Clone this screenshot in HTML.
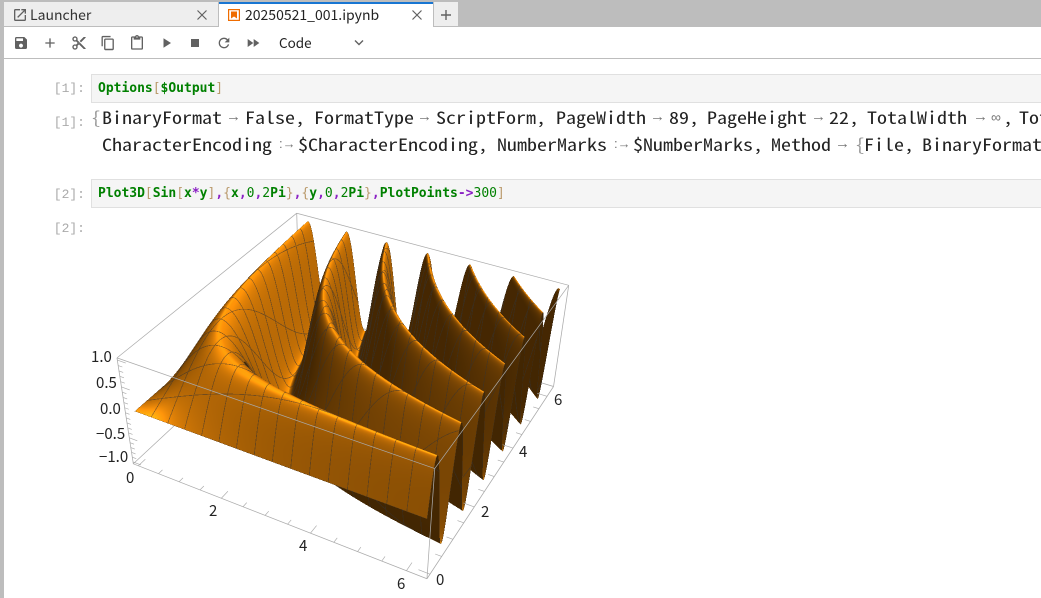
<!DOCTYPE html>
<html><head><meta charset="utf-8"><style>
html,body{margin:0;padding:0;width:1041px;height:598px;overflow:hidden;background:#fff}
body{position:relative;font-family:"Liberation Sans","Noto Sans CJK JP",sans-serif}
.a{position:absolute;white-space:pre}
.ui{font-family:"Noto Sans CJK JP","Liberation Sans",sans-serif;color:#333;font-size:14px;line-height:20px}
.pr{font-family:"Liberation Mono",monospace;font-size:13px;color:#aaa;line-height:16px;width:40px;text-align:right;left:45px}
.in{position:absolute;left:91px;width:960px;height:27px;background:#f5f5f5;border:1px solid #e0e0e0;box-sizing:content-box}
.code{position:absolute;left:98px;font-family:"DejaVu Sans Mono","Liberation Mono",monospace;font-size:13px;line-height:16px;white-space:pre;letter-spacing:-.01px}
.g{color:#008000;font-weight:bold}.n{color:#008000}.t{color:#ba9a6c}.p{color:#8a1fc4;font-weight:bold}
.o{position:absolute;font-family:"Noto Sans Mono CJK JP","Noto Sans Mono CJK SC","DejaVu Sans Mono","Liberation Mono",monospace;font-size:17px;line-height:20px;color:#222;white-space:pre;transform:scaleX(1.176);transform-origin:0 0}
.ar{position:absolute;color:#777;font-family:"Liberation Sans",sans-serif;font-size:15px;line-height:20px;white-space:pre}
svg{position:absolute}
</style></head><body>
<div class="a" style="left:0;top:0;width:1041px;height:26px;background:#bdbdbd"></div>
<div class="a" style="left:0;top:0;width:4px;height:598px;background:#bdbdbd"></div>
<div class="a" style="left:4px;top:2px;width:214px;height:24px;background:#eee"></div>
<div class="a" style="left:219px;top:2px;width:214px;height:25px;background:#fff;border-top:2px solid #1976d2;box-sizing:border-box"></div>
<div class="a" style="left:434px;top:2px;width:24px;height:24px;background:#eee"></div>
<div class="a" style="left:4px;top:26px;width:215px;height:1px;background:#bdbdbd"></div>
<div class="a" style="left:433px;top:26px;width:608px;height:1px;background:#bdbdbd"></div>
<div class="a" style="left:4px;top:58px;width:1037px;height:1px;background:#bdbdbd"></div>

<svg style="left:12px;top:7px" width="16" height="16" viewBox="0 0 24 24" fill="#616161"><path d="M19 19H5V5h7V3H5c-1.11 0-2 .9-2 2v14c0 1.1.89 2 2 2h14c1.1 0 2-.9 2-2v-7h-2v7zM14 3v2h3.59l-9.83 9.83 1.41 1.41L19 6.41V10h2V3h-7z"/></svg>
<div class="a ui" style="left:30px;top:5px">Launcher</div>
<svg style="left:196px;top:9px" width="12" height="12" viewBox="0 0 12 12" stroke="#616161" stroke-width="1.2"><path d="M1.5 1.5l9 9M10.5 1.5l-9 9"/></svg>
<svg style="left:228px;top:9px" width="12" height="12" viewBox="0 0 12 12"><rect x=".6" y=".6" width="10.8" height="10.8" fill="#fff" stroke="#ef6c00" stroke-width="1.2"/><path d="M3 2.500h6v7L6 7.500 3 9.500z" fill="#ef6c00"/></svg>
<div class="a ui" style="left:245px;top:5px;color:#222">20250521_001.ipynb</div>
<svg style="left:411px;top:9px" width="12" height="12" viewBox="0 0 12 12" stroke="#616161" stroke-width="1.2"><path d="M1.5 1.5l9 9M10.5 1.5l-9 9"/></svg>
<svg style="left:440px;top:9px" width="12" height="12" viewBox="0 0 12 12" stroke="#616161" stroke-width="1.4"><path d="M6 1v10M1 6h10"/></svg>

<svg style="left:13px;top:35px" width="16" height="16" viewBox="0 0 24 24" fill="#616161"><path d="M17 3H5c-1.11 0-2 .9-2 2v14c0 1.100.89 2 2 2h14c1.100 0 2-.9 2-2V7l-4-4zm-5 16c-1.66 0-3-1.34-3-3s1.34-3 3-3 3 1.34 3 3-1.34 3-3 3zm3-10H5V5h10v4z"/></svg>
<svg style="left:42px;top:35px" width="16" height="16" viewBox="0 0 24 24" fill="#616161"><path d="M19 13h-6v6h-2v-6H5v-2h6V5h2v6h6v2z"/></svg>
<svg style="left:71px;top:35px" width="16" height="16" viewBox="0 0 24 24" fill="#616161"><path d="M9.640 7.640c.23-.5.36-1.050.36-1.640 0-2.210-1.790-4-4-4S2 3.790 2 6s1.790 4 4 4c.59 0 1.140-.13 1.640-.36L10 12l-2.360 2.360C7.140 14.130 6.590 14 6 14c-2.210 0-4 1.790-4 4s1.790 4 4 4 4-1.790 4-4c0-.59-.13-1.140-.36-1.640L12 14l7 7h3v-1L9.640 7.640zM6 8c-1.100 0-2-.89-2-2s.9-2 2-2 2 .89 2 2-.9 2-2 2zm0 12c-1.100 0-2-.89-2-2s.9-2 2-2 2 .89 2 2-.9 2-2 2zm6-7.500c-.28 0-.5-.22-.5-.5s.22-.5.5-.5.5.22.5.5-.22.5-.5.5zM19 3l-6 6 2 2 7-7V3z"/></svg>
<svg style="left:100px;top:35px" width="16" height="16" viewBox="0 0 18 18" fill="#616161"><path d="M11.900 1H3.200C2.400 1 1.700 1.700 1.700 2.500v10.200h1.500V2.500h8.700V1zm2.200 2.900h-8c-.8 0-1.500.7-1.500 1.500v10.200c0 .8.7 1.500 1.500 1.500h8c.8 0 1.500-.7 1.500-1.500V5.400c0-.8-.7-1.500-1.500-1.500zm0 11.600h-8V5.400h8v10.100z"/></svg>
<svg style="left:129px;top:35px" width="16" height="16" viewBox="0 0 24 24" fill="#616161"><path d="M19 2h-4.180C14.400.84 13.300 0 12 0c-1.300 0-2.400.84-2.820 2H5c-1.100 0-2 .9-2 2v16c0 1.100.9 2 2 2h14c1.100 0 2-.9 2-2V4c0-1.100-.9-2-2-2zm-7 0c.55 0 1 .45 1 1s-.45 1-1 1-1-.45-1-1 .45-1 1-1zm7 18H5V4h2v3h10V4h2v16z"/></svg>
<svg style="left:159px;top:35px" width="16" height="16" viewBox="0 0 16 16" fill="#616161"><path d="M4.500 3.200v9.600L12 8z"/></svg>
<svg style="left:187px;top:35px" width="16" height="16" viewBox="0 0 16 16" fill="#616161"><rect x="4" y="4" width="8" height="8"/></svg>
<svg style="left:216px;top:35px" width="16" height="16" viewBox="0 0 24 24" fill="#616161"><path d="M17.650 6.350C16.200 4.900 14.210 4 12 4c-4.420 0-7.990 3.580-7.990 8s3.570 8 7.990 8c3.730 0 6.840-2.550 7.730-6h-2.080c-.82 2.330-3.040 4-5.650 4-3.310 0-6-2.690-6-6s2.690-6 6-6c1.660 0 3.140.69 4.220 1.780L13 11h7V4l-2.350 2.350z"/></svg>
<svg style="left:245px;top:35px" width="16" height="16" viewBox="0 0 24 24" fill="#616161"><path d="M4 18l8.500-6L4 6v12zm9-12v12l8.500-6L13 6z"/></svg>
<div class="a ui" style="left:279px;top:32px;color:#222;font-size:13.500px">Code</div>
<svg style="left:353px;top:38px" width="12" height="10" viewBox="0 0 12 10" fill="none" stroke="#616161" stroke-width="1.400"><path d="M2 2.500l4 4 4-4"/></svg>

<div class="a pr" style="top:81px">[1]:</div>
<div class="in" style="top:74px"></div>
<div class="code" style="top:81px"><span class="g">Options</span><span class="t">[</span><span class="g">$Output</span><span class="t">]</span></div>
<div class="a pr" style="top:115px">[1]:</div>
<div class="a pr" style="top:187px">[2]:</div>
<div class="in" style="top:179px"></div>
<div class="code" style="top:186px"><span class="g">Plot3D</span><span class="t">[</span><span class="g">Sin</span><span class="t">[</span><span class="g">x</span><span class="p">*</span><span class="g">y</span><span class="t">]</span><span class="p">,</span><span class="t">{</span><span class="g">x</span><span class="p">,</span><span class="n">0</span><span class="p">,</span><span class="n">2</span><span class="g">Pi</span><span class="t">}</span><span class="p">,</span><span class="t">{</span><span class="g">y</span><span class="p">,</span><span class="n">0</span><span class="p">,</span><span class="n">2</span><span class="g">Pi</span><span class="t">}</span><span class="p">,</span><span class="g">PlotPoints</span><span class="p">-&gt;</span><span class="n">300</span><span class="t">]</span></div>
<div class="a pr" style="top:221px">[2]:</div>

<div class="o" style="left:91px;top:107px;color:#999">{</div>
<div class="o" style="left:102px;top:107px">BinaryFormat</div><div class="ar" style="left:226px;top:107px">→</div>
<div class="o" style="left:245px;top:107px">False,</div>
<div class="o" style="left:314px;top:107px">FormatType</div><div class="ar" style="left:417px;top:107px">→</div>
<div class="o" style="left:436px;top:107px">ScriptForm,</div>
<div class="o" style="left:556px;top:107px">PageWidth</div><div class="ar" style="left:650px;top:107px">→</div>
<div class="o" style="left:669px;top:107px">89,</div>
<div class="o" style="left:707px;top:107px">PageHeight</div><div class="ar" style="left:811px;top:107px">→</div>
<div class="o" style="left:829px;top:107px">22,</div>
<div class="o" style="left:867px;top:107px">TotalWidth</div><div class="ar" style="left:973px;top:107px">→</div>
<div class="ar" style="left:991px;top:107px;font-size:14px">∞</div><div class="o" style="left:1003px;top:107px">,</div>
<div class="o" style="left:1019px;top:107px">Tot</div>

<div class="o" style="left:102px;top:134px">CharacterEncoding</div><div class="ar" style="left:279px;top:134px;font-size:13px">:→</div>
<div class="o" style="left:298px;top:134px">$CharacterEncoding,</div>
<div class="o" style="left:497px;top:134px">NumberMarks</div><div class="ar" style="left:614px;top:134px;font-size:13px">:→</div>
<div class="o" style="left:633px;top:134px">$NumberMarks,</div>
<div class="o" style="left:771px;top:134px">Method</div><div class="ar" style="left:835px;top:134px">→</div>
<div class="o" style="left:855px;top:134px;color:#999">{</div>
<div class="o" style="left:864px;top:134px">File,</div>
<div class="o" style="left:922px;top:134px">BinaryFormat</div>

<canvas id="c" width="1000" height="796" style="position:absolute;left:100px;top:200px;width:500px;height:398px"></canvas>
<svg style="left:0;top:0" width="1041" height="598" font-family="Noto Sans CJK JP, Liberation Sans, sans-serif" font-size="15" fill="#222">
<text x="91" y="362">1.0</text><text x="96" y="388">0.5</text><text x="100" y="414">0.0</text><text x="96" y="439">−0.5</text><text x="99" y="462">−1.0</text>
<text x="126" y="483">0</text><text x="209" y="516">2</text><text x="299" y="551">4</text><text x="397" y="589">6</text>
<text x="436" y="585">0</text><text x="481" y="517">2</text><text x="519" y="457">4</text><text x="554" y="405">6</text>
</svg>
<script>
(function(){
var cv=document.getElementById('c'),ctx=cv.getContext('2d'),W=cv.width,H=cv.height,OX=100,OY=200,S=2;
var C=[[0,0,0,133,463],[1,0,0,428,579],[1,1,0,553,387],[0,0,1,117,359],[1,0,1,434,468],[1,1,1,569,285],[0,1,1,297,213]];
var A=[],B=[],i,j,k;
for(i=0;i<11;i++){A.push(new Array(11).fill(0));B.push(0);}
function eq(r,b){for(var a=0;a<11;a++){B[a]+=r[a]*b;for(var d=0;d<11;d++)A[a][d]+=r[a]*r[d];}}
C.forEach(function(c){var X=c[0],Y=c[1],Z=c[2],u=c[3]/500,v=c[4]/500;
eq([X,Y,Z,1,0,0,0,0,-u*X,-u*Y,-u*Z],u);eq([0,0,0,0,X,Y,Z,1,-v*X,-v*Y,-v*Z],v);});
for(i=0;i<11;i++){A[i][i]+=1e-9;var p=i;for(j=i+1;j<11;j++)if(Math.abs(A[j][i])>Math.abs(A[p][i]))p=j;
var t=A[i];A[i]=A[p];A[p]=t;t=B[i];B[i]=B[p];B[p]=t;
for(j=0;j<11;j++)if(j!=i){var f=A[j][i]/A[i][i];if(f){for(k=i;k<11;k++)A[j][k]-=f*A[i][k];B[j]-=f*B[i];}}}
var P=[];for(i=0;i<11;i++)P.push(B[i]/A[i][i]);
function proj(X,Y,Z){var w=P[8]*X+P[9]*Y+P[10]*Z+1;return [((P[0]*X+P[1]*Y+P[2]*Z+P[3])/w*500-OX)*S,((P[4]*X+P[5]*Y+P[6]*Z+P[7])/w*500-OY)*S];}
function pad(a){return (a+.02)/1.04;}
function line(a,b,col,lw){var q=proj(a[0],a[1],a[2]),r=proj(b[0],b[1],b[2]);ctx.strokeStyle=col||'#aaa';ctx.lineWidth=lw||1.500;ctx.beginPath();ctx.moveTo(q[0],q[1]);ctx.lineTo(r[0],r[1]);ctx.stroke();}
var G='#aaaaaa';
line([0,1,1],[0,0,1],G);line([0,1,1],[1,1,1],G);line([0,1,1],[0,1,0],G);line([0,1,0],[0,0,0],G);line([0,1,0],[1,1,0],G);
var img=ctx.getImageData(0,0,W,H),D=img.data;
var TP=2*Math.PI,N=640,NV=N+1,PX=new Float32Array(NV*NV),PY=new Float32Array(NV*NV);
for(i=0;i<=N;i++)for(j=0;j<=N;j++){var X=i/N,Y=j/N,z=Math.sin(X*Y*TP*TP),q=proj(pad(X),pad(Y),pad((z+1)/2));PX[i*NV+j]=q[0];PY[i*NV+j]=q[1];}
var vl=Math.sqrt(1.69+5.76+4),vx=1.3/vl,vy=-2.4/vl,vz=2/vl;
var lx=.38,ly=-.19,lz=.67;
var hx=.1,hy=-.45,hz=.89,hl=Math.sqrt(hx*hx+hy*hy+hz*hz);hx/=hl;hy/=hl;hz/=hl;
function tri(x0,y0,X0,Y0,x1,y1,X1,Y1,x2,y2,X2,Y2){
var area=(x1-x0)*(y2-y0)-(x2-x0)*(y1-y0);if(Math.abs(area)<1e-6)return;
var mnx=Math.max(0,Math.ceil(Math.min(x0,x1,x2)-.5)),mxx=Math.min(W-1,Math.floor(Math.max(x0,x1,x2)-.5));
var mny=Math.max(0,Math.ceil(Math.min(y0,y1,y2)-.5)),mxy=Math.min(H-1,Math.floor(Math.max(y0,y1,y2)-.5));
var ia=1/area;
var dXx=((X1-X0)*(y2-y0)-(X2-X0)*(y1-y0))*ia,dXy=((X2-X0)*(x1-x0)-(X1-X0)*(x2-x0))*ia;
var dYx=((Y1-Y0)*(y2-y0)-(Y2-Y0)*(y1-y0))*ia,dYy=((Y2-Y0)*(x1-x0)-(Y1-Y0)*(x2-x0))*ia;
var gX=Math.sqrt(dXx*dXx+dXy*dXy),gY=Math.sqrt(dYx*dYx+dYy*dYy);
var eps=-1e-3;
for(var py=mny;py<=mxy;py++){for(var px=mnx;px<=mxx;px++){
var cx=px+.5,cy=py+.5;
var w1=((cx-x0)*(y2-y0)-(x2-x0)*(cy-y0))*ia,w2=((x1-x0)*(cy-y0)-(cx-x0)*(y1-y0))*ia,w0=1-w1-w2;
if(w0<eps||w1<eps||w2<eps)continue;
var Xp=w0*X0+w1*X1+w2*X2,Yp=w0*Y0+w1*Y1+w2*Y2;
var x=Xp*TP,y=Yp*TP,co=Math.cos(x*y);
var a=.2*co*y*TP,b=.2*co*x*TP,l=1/Math.sqrt(a*a+b*b+1);
var nx=-a*l,ny=-b*l,nz=l,back=false,dv=nx*vx+ny*vy+nz*vz;
if(dv<0){nx=-nx;ny=-ny;nz=-nz;back=true;}
var d=nx*lx+ny*ly+nz*lz;if(d<0)d=0;
var I=back?(.26+.12*d):(.27+d);
var s=nx*hx+ny*hy+nz*hz;s=(s>0&&!back)?Math.pow(s,24)*.3:0;
if(!back&&nz>.5)s+=Math.pow(nz,40)*.12;
var R=255*I+255*s,Gc=146*I+170*s,Bc=8*I+30*s;
var mx=Math.abs(Xp*16-Math.round(Xp*16))/16/(gX||1e-6),my=Math.abs(Yp*16-Math.round(Yp*16))/16/(gY||1e-6);
var m=Math.min(mx,my);
if(m<.75){var al=.52;R=R*(1-al)+52*al;Gc=Gc*(1-al)+50*al;Bc=Bc*(1-al)+50*al;}
var o=(py*W+px)*4;D[o]=R>255?255:R;D[o+1]=Gc>255?255:Gc;D[o+2]=Bc>255?255:Bc;D[o+3]=255;
}}}
for(i=0;i<N;i++){for(j=N-1;j>=0;j--){
var a0=i*NV+j,a1=(i+1)*NV+j,a2=i*NV+j+1,a3=(i+1)*NV+j+1,Xa=i/N,Xb=(i+1)/N,Ya=j/N,Yb=(j+1)/N;
tri(PX[a2],PY[a2],Xa,Yb,PX[a3],PY[a3],Xb,Yb,PX[a0],PY[a0],Xa,Ya);
tri(PX[a3],PY[a3],Xb,Yb,PX[a1],PY[a1],Xb,Ya,PX[a0],PY[a0],Xa,Ya);
}}
ctx.putImageData(img,0,0);
line([0,0,1],[1,0,1],G);line([1,0,1],[1,1,1],G);line([1,0,1],[1,0,0],G);
line([0,0,1],[0,0,0],G);line([1,1,1],[1,1,0],G);line([0,0,0],[1,0,0],G);line([1,0,0],[1,1,0],G);
for(var v=0;v<=6.01;v+=.5){var T=pad(v/TP),L=(Math.abs(v%2)<.01)?.035:.02;
line([T,0,0],[T,L,0],G,1.300);line([1,T,0],[1-L,T,0],G,1.300);}
for(var zz=0;zz<=1.001;zz+=.05){var Lz=(Math.abs((zz*4)%1)<.01)?.03:.015;var ZZ=pad(zz);line([0,0,ZZ],[Lz,0,ZZ],G,1.300);}
})();
</script>
</body></html>
